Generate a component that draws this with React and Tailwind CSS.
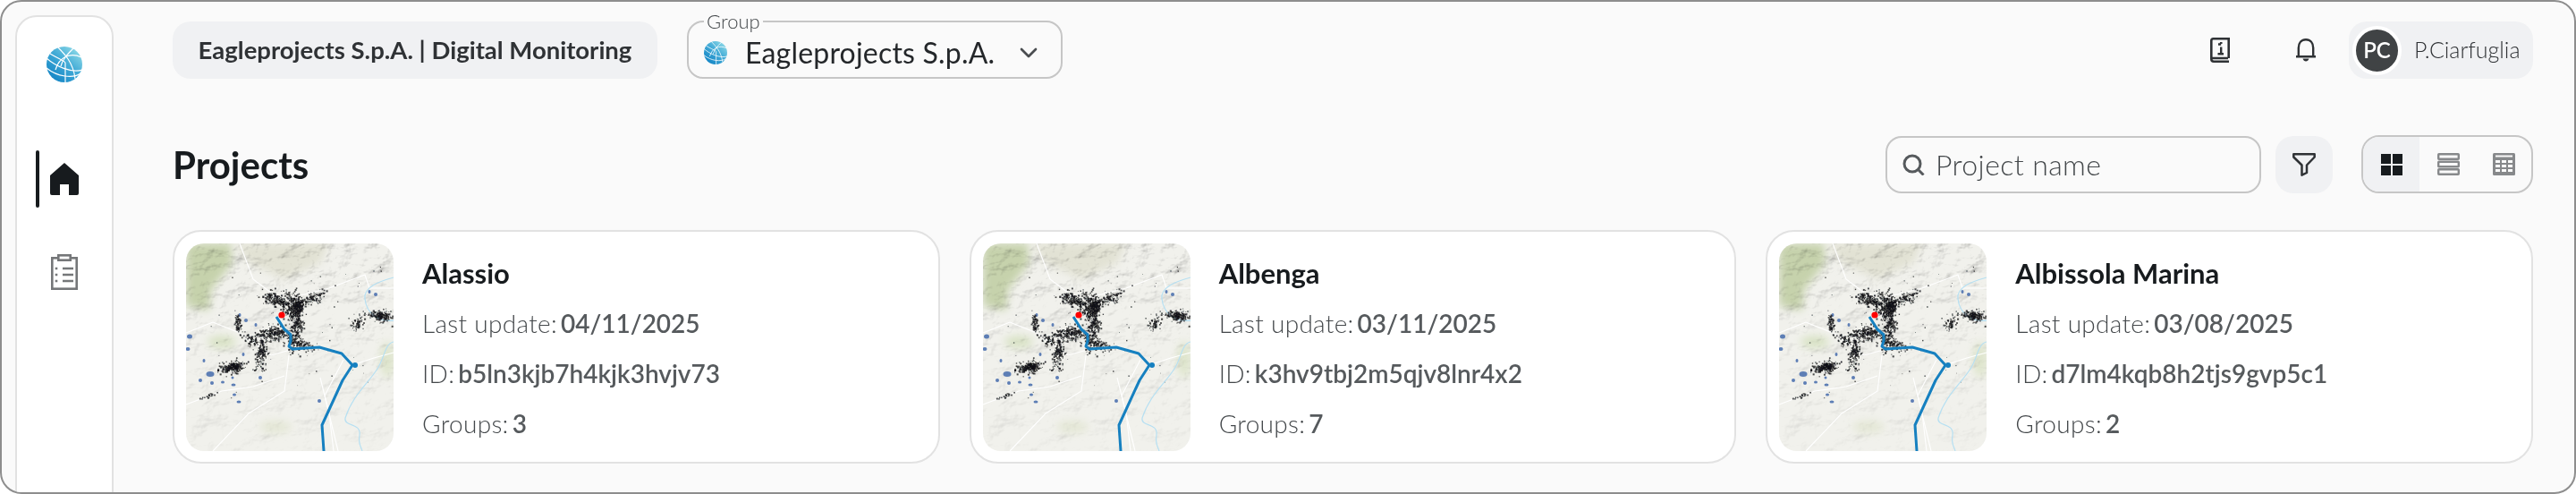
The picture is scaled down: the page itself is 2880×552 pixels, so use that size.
import React from "react";
import { ChevronDown } from "lucide-react";

// small seeded generator, so the speckles on the map stay put between renders
function makeRandom(seed) {
  let a = seed;
  return () => {
    a = (a + 0x6d2b79f5) | 0;
    let t = Math.imul(a ^ (a >>> 15), 1 | a);
    t = (t + Math.imul(t ^ (t >>> 7), 61 | t)) ^ t;
    return ((t ^ (t >>> 14)) >>> 0) / 4294967296;
  };
}

const clusters = [
  // cx, cy, spreadX, spreadY, count, angle
  [100, 62, 8, 4, 170, 0.25],
  [118, 68, 6, 8, 240, 0.1],
  [124, 72, 3, 5, 120, 0],
  [140, 62, 9, 3, 110, -0.45],
  [122, 95, 4, 12, 200, 0.1],
  [128, 112, 7, 3, 90, 0.3],
  [97, 100, 11, 4, 210, -0.1],
  [84, 122, 3.2, 11, 170, 0.14],
  [72, 108, 5, 3, 60, 0.5],
  [50, 138, 7, 3, 200, -0.25],
  [54, 137, 3, 2, 60, 0],
  [58, 90, 2, 6, 70, -0.2],
  [218, 80, 6, 3, 160, 0.1],
  [192, 88, 3, 5, 50, 0.6],
  [24, 170, 5, 1.2, 20, -0.4],
];

function buildSpeckles() {
  const rand = makeRandom(42);
  const gauss = () => Math.sqrt(-2 * Math.log(rand() + 0.0001)) * Math.cos(6.283 * rand());
  const out = [];
  clusters.forEach(([cx, cy, sx, sy, n, a]) => {
    for (let i = 0; i < n; i++) {
      const dx = gauss() * sx;
      const dy = gauss() * sy;
      out.push({
        x: cx + dx * Math.cos(a) - dy * Math.sin(a),
        y: cy + dx * Math.sin(a) + dy * Math.cos(a),
        s: 0.8 + rand() * 1.3,
      });
    }
  });
  // loose dots all around
  for (let i = 0; i < 60; i++) {
    out.push({ x: 20 + rand() * 200, y: 25 + rand() * 150, s: 0.6 + rand() * 0.9 });
  }
  return out;
}

const speckles = buildSpeckles();

const blueBlobs = [
  [27, 146, 4.5, 3], [16, 153, 2, 2], [29, 156, 2, 2], [41, 155, 2, 1.5], [53, 158, 2.5, 1.5], [52, 150, 1.5, 1.5],
  [54, 169, 2, 1.5], [59, 177, 2.5, 1.5], [20, 131, 1.5, 2], [4, 104, 3, 2.5], [2, 118, 2.5, 2], [67, 86, 2, 2],
  [60, 80, 1.5, 2], [78, 91, 1.5, 2], [212, 57, 2, 2], [205, 54, 1.5, 2], [64, 124, 1.5, 2], [83, 150, 2, 2], [149, 176, 2, 2],
];

function MapThumb() {
  return (
    <svg viewBox="0 0 232 232" className="block h-full w-full">
      <defs>
        <filter id="soft" x="-20%" y="-20%" width="140%" height="140%">
          <feGaussianBlur stdDeviation="5" />
        </filter>
        <filter id="softer" x="-5%" y="-5%" width="110%" height="110%">
          <feGaussianBlur stdDeviation="0.4" />
        </filter>
        <filter id="hills" x="0" y="0" width="100%" height="100%">
          <feTurbulence type="fractalNoise" baseFrequency="0.035 0.05" numOctaves="5" seed="8" />
          <feDiffuseLighting surfaceScale="6" diffuseConstant="1.25" lightingColor="#ffffff">
            <feDistantLight azimuth="225" elevation="55" />
          </feDiffuseLighting>
          <feGaussianBlur stdDeviation="0.6" />
        </filter>
        <linearGradient id="hillFade" x1="0" y1="0" x2="0" y2="1">
          <stop offset="0" stopColor="#fff" stopOpacity="0.6" />
          <stop offset="0.35" stopColor="#fff" stopOpacity="0.3" />
          <stop offset="1" stopColor="#fff" stopOpacity="0.12" />
        </linearGradient>
        <mask id="hillMask">
          <rect width="232" height="232" fill="url(#hillFade)" />
        </mask>
      </defs>
      <rect width="232" height="232" fill="#f1f1ec" />
      <g filter="url(#soft)">
        <path d="M0 0H50L52 22L28 52L26 75L0 70Z" fill="#c6d2ac" />
        <path d="M55 0H160L150 22L110 40L70 22Z" fill="#e2e2d4" />
        <ellipse cx="40" cy="110" rx="16" ry="7" fill="#d8e2c4" />
        <ellipse cx="225" cy="130" rx="8" ry="20" fill="#dee5cc" />
        <ellipse cx="100" cy="205" rx="18" ry="7" fill="#e4e7d6" />
      </g>
      <g mask="url(#hillMask)" className="mix-blend-multiply">
        <rect width="232" height="232" filter="url(#hills)" />
      </g>
      <g filter="url(#softer)">
        <g fill="none" stroke="#ffffff" strokeWidth="1.1">
          <path d="M0 100L30 88L60 100L95 125L120 118" />
          <path d="M0 180L40 165L75 160L110 148" />
          <path d="M30 232L70 190L110 165L115 125" />
          <path d="M170 232L155 170L176 130" />
          <path d="M120 60L160 50L200 35L205 50L232 50" />
          <path d="M186 136L210 128L232 122" />
          <path d="M60 0L75 40L95 55" />
          <path d="M150 150L160 190L165 232" />
        </g>
        <path d="M232 38C218 42 198 48 200 62C202 78 214 88 232 86" fill="none" stroke="#b7e0f2" strokeWidth="1.3" />
        <path d="M232 110C222 112 222 128 214 140C204 156 186 170 178 195C176 205 196 200 194 214C192 224 196 228 197 232" fill="none" stroke="#b7e0f2" strokeWidth="1.2" />
        {blueBlobs.map(([x, y, rx, ry], i) => (
          <ellipse key={i} cx={x} cy={y} rx={rx} ry={ry} fill="#5d7eb5" />
        ))}
        {speckles.map((p, i) => (
          <rect key={i} x={p.x} y={p.y} width={p.s} height={p.s} fill="#101316" opacity="0.75" />
        ))}
        <path
          d="M101 82L110 96L117 102L117 109L115 115L119 118L149 116L174 123L186 136L175 153L152 203L154 232"
          fill="none"
          stroke="#1580c0"
          strokeWidth="3"
          strokeLinejoin="round"
        />
        <circle cx="189" cy="136" r="3" fill="#1580c0" />
        <circle cx="107" cy="80" r="3.6" fill="#ff0000" />
      </g>
    </svg>
  );
}

function Globe({ className, id }) {
  return (
    <svg viewBox="0 0 40 40" className={className}>
      <defs>
        <linearGradient id={id} x1="0.15" y1="0.9" x2="0.85" y2="0.1">
          <stop offset="0" stopColor="#1586c6" />
          <stop offset="0.55" stopColor="#41aad6" />
          <stop offset="1" stopColor="#88d6e6" />
        </linearGradient>
      </defs>
      <circle cx="20" cy="20" r="20" fill={`url(#${id})`} />
      <g fill="none" stroke="#fff" strokeWidth="1.2">
        <path d="M0 13C10 22 28 30 40 26" />
        <path d="M0 24C12 34 30 36 38 30" />
        <path d="M10 26C14 12 26 6 39 12" />
        <path d="M12 0C20 8 30 18 32 36" />
        <path d="M21 18V40" />
        <path d="M4 8C14 14 20 16 21 18" />
        <path d="M30 2C24 8 18 14 16 22" />
      </g>
    </svg>
  );
}

function HomeIcon() {
  return (
    <svg viewBox="0 0 32 36" className="h-9 w-8" fill="#171b1e">
      <path d="M16 0L32 14V34Q32 36 30 36H21V24H11V36H2Q0 36 0 34V14Z" />
    </svg>
  );
}

function ClipboardIcon() {
  return (
    <svg viewBox="0 0 30 40" className="h-10 w-[30px]" fill="none" stroke="#757779" strokeWidth="2.6">
      <rect x="1.3" y="4.3" width="27.4" height="34.4" />
      <rect x="8.3" y="1.3" width="13.4" height="5.4" fill="#fff" />
      <path d="M13 16H25M13 23H25M13 30H25" />
      <path d="M6 14.7V17.3M6 21.7V24.3M6 28.7V31.3" />
    </svg>
  );
}

function BookInfoIcon() {
  return (
    <svg viewBox="0 0 22 28" className="h-7 w-[22px]" fill="none" stroke="#2f3235" strokeWidth="2.6">
      <path d="M20.7 23V1.3H3.5Q1.3 1.3 1.3 3.5V24Q1.3 26.7 4 26.7H21" />
      <path d="M2 23H20" />
      <path d="M9 7.5H12.2M12.2 10.5V18M8.5 18.2H15" strokeWidth="2.4" />
      <path d="M12.2 5V7" />
    </svg>
  );
}

function BellIcon() {
  return (
    <svg viewBox="0 0 24 26" className="h-[26px] w-6" fill="none" stroke="#2f3235" strokeWidth="2.4">
      <path d="M1 20.2H23M3.8 20V10.5C3.8 5 7 1.2 12 1.2S20.2 5 20.2 10.5V20" />
      <path d="M8.5 22.5H15.5Q14.5 25.5 12 25.5T8.5 22.5Z" fill="#2f3235" stroke="none" />
    </svg>
  );
}

function SearchIcon() {
  return (
    <svg viewBox="0 0 25 24" className="h-6 w-[25px]" fill="none" stroke="#565a5d" strokeWidth="3">
      <circle cx="11" cy="11" r="9" />
      <path d="M17 17L23.5 23.5" />
    </svg>
  );
}

function FilterIcon() {
  return (
    <svg viewBox="0 0 26 26" className="h-[26px] w-[26px]" fill="none" stroke="#2f3235" strokeWidth="2.5" strokeLinejoin="round">
      <path d="M1.3 1.3H24.7V4.5L16 13.5V22L10.5 24.7V13.5L1.3 4.5Z" />
    </svg>
  );
}

function GridIcon() {
  return (
    <svg viewBox="0 0 24 24" className="h-6 w-6" fill="#171b1e">
      <rect width="11" height="11" />
      <rect x="13" width="11" height="11" />
      <rect y="13" width="11" height="11" />
      <rect x="13" y="13" width="11" height="11" />
    </svg>
  );
}

function RowsIcon() {
  return (
    <svg viewBox="0 0 25 25" className="h-[25px] w-[25px]" fill="none" stroke="#87898b" strokeWidth="2.4">
      <rect x="1.2" y="1.2" width="22.6" height="5.6" rx="0.6" />
      <rect x="1.2" y="9.7" width="22.6" height="5.6" rx="0.6" />
      <rect x="1.2" y="18.2" width="22.6" height="5.6" rx="0.6" />
    </svg>
  );
}

function TableIcon() {
  return (
    <svg viewBox="0 0 25 25" className="h-[25px] w-[25px]">
      <rect width="25" height="25" rx="1.5" fill="#87898b" />
      <rect x="3" y="2.5" width="19" height="2" fill="#fafafa" />
      <g fill="#fafafa">
        <rect x="3" y="8" width="5" height="3" />
        <rect x="10" y="8" width="5" height="3" />
        <rect x="17" y="8" width="5" height="3" />
        <rect x="3" y="13" width="5" height="3" />
        <rect x="10" y="13" width="5" height="3" />
        <rect x="17" y="13" width="5" height="3" />
        <rect x="3" y="18" width="5" height="3" />
        <rect x="10" y="18" width="5" height="3" />
        <rect x="17" y="18" width="5" height="3" />
      </g>
    </svg>
  );
}

const projects = [
  { name: "Alassio", updated: "04/11/2025", id: "b5ln3kjb7h4kjk3hvjv73", groups: 3 },
  { name: "Albenga", updated: "03/11/2025", id: "k3hv9tbj2m5qjv8lnr4x2", groups: 7 },
  { name: "Albissola Marina", updated: "03/08/2025", id: "d7lm4kqb8h2tjs9gvp5c1", groups: 2 },
];

function InfoRow({ label, value }) {
  return (
    <div className="flex h-14 items-center gap-1 text-[28px] leading-none text-[#565a5d]">
      <span className="font-light tracking-[0.3px] text-[#44484b]">{label}</span>
      <span className="font-semibold">{value}</span>
    </div>
  );
}

function ProjectCard({ project }) {
  return (
    <div className="flex h-[261px] items-start rounded-[32px] border-2 border-[#e2e2e2] bg-white p-[13px]">
      <div className="h-[232px] w-[232px] shrink-0 overflow-hidden rounded-[20px]">
        <MapThumb />
      </div>
      <div className="ml-8 pt-[5px]">
        <div className="flex h-14 items-center text-[31px] leading-none font-bold text-[#171b1e]">{project.name}</div>
        <InfoRow label="Last update:" value={project.updated} />
        <InfoRow label="ID:" value={project.id} />
        <InfoRow label="Groups:" value={project.groups} />
      </div>
    </div>
  );
}

export default function App() {
  return (
    <div className="flex h-[552px] w-[2880px] overflow-hidden rounded-[24px] border-2 border-[#8e8e8e] bg-[#fafafa] font-['Lato',sans-serif]">
      <aside className="mt-[15px] ml-[15px] h-[600px] w-[110px] shrink-0 rounded-t-[24px] border-2 border-[#e2e2e2] bg-white">
        <div className="mt-[33px] flex justify-center">
          <Globe className="h-10 w-10" id="globe-nav" />
        </div>
        <div className="mt-[76px] ml-[21px] flex h-16 items-center gap-3">
          <div className="h-16 w-1 rounded-full bg-[#171b1e]" />
          <HomeIcon />
        </div>
        <div className="mt-[52px] flex justify-center">
          <ClipboardIcon />
        </div>
      </aside>

      <main className="ml-[66px] flex-1 pt-[22px] pr-[46px]">
        <header className="flex h-16 items-center">
          <div className="flex h-16 w-[542px] items-center justify-center rounded-[20px] bg-[#f0f1f3] text-[27.5px] font-bold text-[#2f3235]">
            Eagleprojects S.p.A. | Digital Monitoring
          </div>
          <fieldset className="relative ml-[33px] h-[74px] w-[420px] -translate-y-[5px] rounded-[18px] border-2 border-[#c6c6c6] pr-5 pl-[17px]">
            <legend className="px-[3px] text-[22px] leading-5 font-light text-[#44484b]">Group</legend>
            <div className="flex h-[50px] items-center">
              <Globe className="h-[26px] w-[26px]" id="globe-select" />
              <span className="ml-5 flex-1 text-[32px] leading-none font-normal tracking-[0.2px] text-[#24272a]">Eagleprojects S.p.A.</span>
              <ChevronDown className="h-8 w-8 text-[#4a4d50]" strokeWidth={2} />
            </div>
          </fieldset>
          <div className="ml-auto flex items-center">
            <BookInfoIcon />
            <div className="ml-[73px]">
              <BellIcon />
            </div>
            <div className="ml-9 flex h-16 w-[206px] items-center rounded-[20px] bg-[#f0f1f3] pl-1">
              <div className="flex h-[55px] w-[55px] items-center justify-center rounded-full border-4 border-white bg-[#404345] text-[24px] font-semibold text-white">
                PC
              </div>
              <span className="ml-[14px] text-[25px] font-light text-[#2f3235]">P.Ciarfuglia</span>
            </div>
          </div>
        </header>

        <div className="mt-[63px] flex h-[65px] items-center">
          <h1 className="text-[42px] leading-none font-bold text-[#171b1e]">Projects</h1>
          <div className="ml-auto flex h-16 w-[420px] items-center rounded-[18px] border-2 border-[#c6c6c6] pl-[17px]">
            <SearchIcon />
            <span className="ml-3 text-[32px] leading-none font-light tracking-[0.4px] text-[#44484b]">Project name</span>
          </div>
          <button className="ml-4 flex h-16 w-16 items-center justify-center rounded-[20px] bg-[#f0f1f3]">
            <FilterIcon />
          </button>
          <div className="ml-8 flex h-[65px] w-48 overflow-hidden rounded-[20px] border-2 border-[#c6c6c6]">
            <div className="flex w-[63px] items-center justify-center bg-[#f0f1f3]">
              <GridIcon />
            </div>
            <div className="flex w-16 items-center justify-center">
              <RowsIcon />
            </div>
            <div className="flex w-[61px] items-center justify-center">
              <TableIcon />
            </div>
          </div>
        </div>

        <div className="mt-[41px] grid grid-cols-3 gap-[33px]">
          {projects.map((p) => (
            <ProjectCard key={p.name} project={p} />
          ))}
        </div>
      </main>
    </div>
  );
}
